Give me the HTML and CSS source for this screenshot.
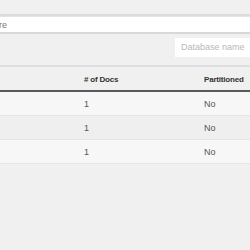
FILE: index.html
```html
<!DOCTYPE html>
<html>
<head>
<link rel="stylesheet" href="styles.css">
</head>
<body>
<div class="topbar"></div>
<div class="search"><span class="search-text">re</span></div>
<div class="toolbar">
  <div class="dbinput">Database name</div>
</div>
<table class="dbtable">
  <thead>
    <tr><th class="c-name"></th><th class="c-docs"># of Docs</th><th class="c-part">Partitioned</th></tr>
  </thead>
  <tbody>
    <tr class="odd"><td></td><td>1</td><td>No</td></tr>
    <tr class="even"><td></td><td>1</td><td>No</td></tr>
    <tr class="odd"><td></td><td>1</td><td>No</td></tr>
  </tbody>
</table>
</body>
</html>
```
FILE: styles.css
```css
html, body { margin: 0; padding: 0; }
body {
  width: 250px; height: 250px; overflow: hidden;
  background: #f0f0f0;
  font-family: "Liberation Sans", Arial, sans-serif;
  color: #333;
}
.topbar { height: 14px; background: #f0f0f0; border-bottom: 2px solid #dcdcdc; }
.search {
  height: 15px; background: #fff;
  border-top: 1px solid #e4e4e4; border-bottom: 2px solid #d8d8d8;
  display: flex; align-items: center;
  font-size: 9px; color: #777;
}
.search-text { margin-left: -1px; }
.toolbar { display: flex; justify-content: flex-end; padding-top: 4px; height: 31px; box-sizing: border-box; }
.dbinput {
  width: 75px; height: 19px; background: #fff;
  box-sizing: border-box; padding-left: 6px;
  font-size: 9px; color: #b8b8b8; line-height: 19px;
}
.dbtable { width: 250px; border-collapse: collapse; }
.dbtable th {
  height: 21px; font-size: 8px; font-weight: bold; letter-spacing: -0.2px; text-align: left; color: #333;
  border-top: 2px solid #dedede; border-bottom: 2px solid #5a5a5a; padding: 0; padding-top: 2px;
}
.c-name { width: 84px; }
.c-docs { width: 120px; }
.dbtable td { height: 22px; font-size: 9px; color: #555; padding: 0; padding-top: 1px; border-bottom: 1px solid #e6e6e6; }
.odd td { background: #f7f7f7; }
.even td { background: #efefef; }
```
